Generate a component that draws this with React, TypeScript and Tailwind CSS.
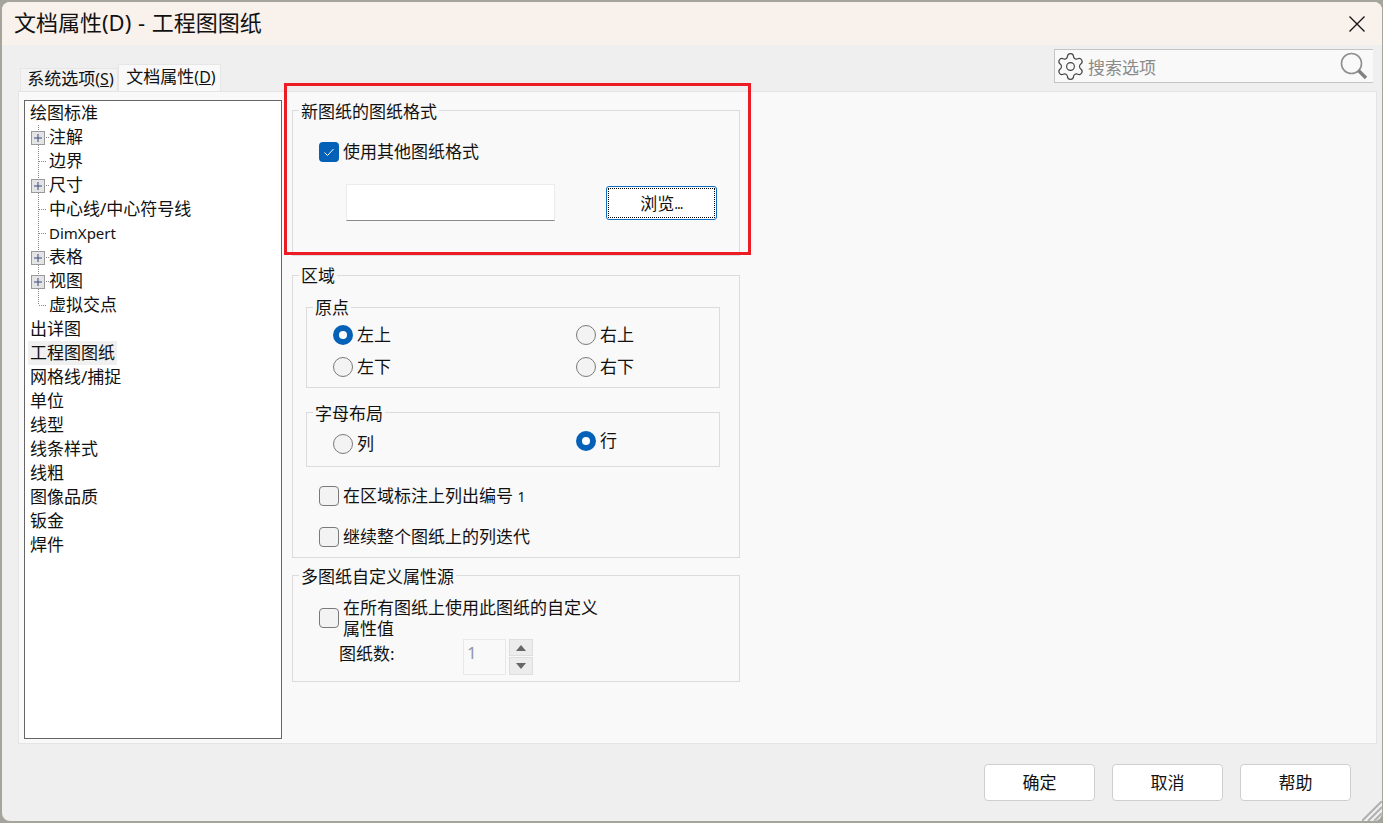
import React from "react";
import { Settings } from "lucide-react";

function Plus() {
  return (
    <svg width="19" height="24" viewBox="0 0 19 24" className="shrink-0">
      <line x1="8.5" y1="0" x2="8.5" y2="24" stroke="#8a8a8a" strokeDasharray="1 1" />
      <line x1="14" y1="12.5" x2="19" y2="12.5" stroke="#8a8a8a" strokeDasharray="1 1" />
      <rect x="1.5" y="6.5" width="13" height="13" fill="#e4e4e4" stroke="#9a9a9a" />
      <path d="M4 13H12M8 9V17" stroke="#3c4a7c" strokeWidth="1" fill="none" />
    </svg>
  );
}

function Branch({ last }: { last?: boolean }) {
  return (
    <svg width="19" height="24" viewBox="0 0 19 24" className="shrink-0">
      <line x1="8.5" y1="0" x2="8.5" y2={last ? 12 : 24} stroke="#8a8a8a" strokeDasharray="1 1" />
      <line x1="9" y1="12.5" x2="17" y2="12.5" stroke="#8a8a8a" strokeDasharray="1 1" />
    </svg>
  );
}

function Top({ children }: { children: React.ReactNode }) {
  return <div className="h-6 pl-[5px] leading-6">{children}</div>;
}

function Child({ children, plus, last }: { children: React.ReactNode; plus?: boolean; last?: boolean }) {
  return (
    <div className="flex h-6 items-center pl-[5px] leading-6">
      {plus ? <Plus /> : <Branch last={last} />}
      <span>{children}</span>
    </div>
  );
}

function Group({
  title,
  className,
  titleClass = "-mt-[11px]",
  children,
}: {
  title: string;
  className: string;
  titleClass?: string;
  children: React.ReactNode;
}) {
  return (
    <div className={`border border-[#dcdcdc] ${className}`}>
      <div className={`ml-[6px] h-6 w-fit bg-[#f9f9f9] px-[2px] leading-6 ${titleClass}`}>{title}</div>
      {children}
    </div>
  );
}

function Checkbox({ checked }: { checked?: boolean }) {
  return checked ? (
    <span className="flex h-5 w-5 shrink-0 items-center justify-center rounded-[4px] bg-[#0560b8]">
      <svg width="12" height="12" viewBox="0 0 12 12">
        <path d="M1.5 6.5L4.5 9.5L10.5 3" fill="none" stroke="#fff" strokeWidth="1" />
      </svg>
    </span>
  ) : (
    <span className="h-5 w-5 shrink-0 rounded-[4px] border border-[#7a7a7a] bg-[#f3f3f3]" />
  );
}

function Radio({ checked, label, className = "" }: { checked?: boolean; label: string; className?: string }) {
  return (
    <div className={`flex h-6 items-center gap-[4px] ${className}`}>
      {checked ? (
        <span className="flex h-5 w-5 shrink-0 items-center justify-center rounded-full bg-[#0560b8]">
          <span className="h-2 w-2 rounded-full bg-white" />
        </span>
      ) : (
        <span className="h-5 w-5 shrink-0 rounded-full border border-[#7a7a7a] bg-[#f3f3f3]" />
      )}
      <span>{label}</span>
    </div>
  );
}

function CheckRow({ label, className = "" }: { label: React.ReactNode; className?: string }) {
  return (
    <div className={`flex h-6 items-center gap-[4px] pl-[26px] ${className}`}>
      <Checkbox />
      <span>{label}</span>
    </div>
  );
}

function FooterButton({ label }: { label: string }) {
  return (
    <button className="h-[37px] w-[111px] rounded-[4px] border border-[#cfcfcf] bg-white text-[#111]">{label}</button>
  );
}

export default function App() {
  return (
    <div className="relative h-[823px] w-[1383px] overflow-hidden bg-[#a5a59c] pb-[2px] pl-[2px] pr-px pt-[2px] text-[17px] text-[#111] [font-family:'Noto_Sans','Noto_Sans_CJK_SC',sans-serif]">
      <div className="relative flex h-full flex-col overflow-hidden rounded-[8px] bg-[#efefef]">
        <div className="flex h-[43px] shrink-0 items-center justify-between bg-[#f9f1ec] pl-[12px] pr-[17px]">
          <span className="mb-[4px] text-[22px] leading-[40px] [word-spacing:1px]">文档属性(D) - 工程图图纸</span>
          <svg width="16" height="16" viewBox="0 0 16 16">
            <path d="M0.5 0.5L15.5 15.5M15.5 0.5L0.5 15.5" stroke="#111" strokeWidth="1.3" fill="none" />
          </svg>
        </div>

        <div className="flex h-[46px] shrink-0 items-end pl-[18px] pr-[9px]">
          <div className="flex h-[23px] w-[98px] items-center justify-center border-x border-t border-[#e6e6e6] bg-[#f3f3f3] pb-[2px] pl-[3px] leading-5">
            <span>
              系统选项<span className="text-[16px]">(<span className="underline">S</span>)</span>
            </span>
          </div>
          <div className="-mb-px flex h-[28px] w-[103px] items-center justify-center border-x border-t border-[#e6e6e6] bg-[#f9f9f9] pb-[3px] pl-[3px] leading-5">
            <span>
              文档属性<span className="text-[16px]">(<span className="underline">D</span>)</span>
            </span>
          </div>
          <div className="mb-[8px] ml-auto flex h-[34px] w-[319px] items-center border-y border-l border-[#c4c4c4] bg-[#f9f9f9] pr-[5px]">
            <Settings size={31} strokeWidth={0.9} className="text-[#444]" />
            <span className="ml-[2px] mt-[3px] text-[#8a8a8a]">搜索选项</span>
            <svg width="28" height="28" viewBox="0 0 28 28" className="ml-auto">
              <circle cx="11.5" cy="11.5" r="10" fill="none" stroke="#8f8f8f" strokeWidth="1.6" />
              <path d="M18.5 18.5L26 26" stroke="#808080" strokeWidth="3.4" fill="none" />
            </svg>
          </div>
        </div>

        <div className="ml-[16px] mr-[5px] flex h-[653px] shrink-0 border border-[#e4e4e4] bg-[#f9f9f9]">
          <div className="ml-[5px] mt-[8px] h-[639px] w-[258px] shrink-0 border border-[#666] bg-white">
            <Top>绘图标准</Top>
            <Child plus>注解</Child>
            <Child>边界</Child>
            <Child plus>尺寸</Child>
            <Child>中心线/中心符号线</Child>
            <Child>
              <span className="text-[15px]">DimXpert</span>
            </Child>
            <Child plus>表格</Child>
            <Child plus>视图</Child>
            <Child last>虚拟交点</Child>
            <Top>出详图</Top>
            <div className="h-6 pl-[3px] leading-6">
              <span className="inline-block h-6 bg-[#f0f0f0] px-[2px]">工程图图纸</span>
            </div>
            <Top>网格线/捕捉</Top>
            <Top>单位</Top>
            <Top>线型</Top>
            <Top>线条样式</Top>
            <Top>线粗</Top>
            <Top>图像品质</Top>
            <Top>钣金</Top>
            <Top>焊件</Top>
          </div>

          <div className="ml-[10px] w-[448px] shrink-0">
            <Group title="新图纸的图纸格式" className="mt-[18px] h-[146px]">
              <div className="mt-[16px] flex h-6 items-center gap-[4px] pl-[26px]">
                <Checkbox checked />
                <span>使用其他图纸格式</span>
              </div>
              <div className="mt-[20px] flex items-center pl-[53px]">
                <div className="h-[37px] w-[209px] border border-[#ececec] border-b-[#8a8a8a] bg-white" />
                <button className="ml-[51px] h-[34px] w-[111px] rounded-[3px] border border-[#0f6cbd] bg-white p-px">
                  <span className="flex h-full w-full items-center justify-center border border-dotted border-black pt-[2px]">
                    浏览<span className="text-[14px] tracking-[-1px]">...</span>
                  </span>
                </button>
              </div>
            </Group>

            <Group title="区域" titleClass="-mt-[12px]" className="mt-[19px] h-[283px]">
              <div className="ml-[13px] mt-[19px] h-[81px] w-[414px] border border-[#dcdcdc]">
                <div className="-mt-[12px] ml-[6px] h-6 w-fit bg-[#f9f9f9] px-[2px] leading-6">原点</div>
                <div className="ml-[26px] mt-[3px] grid grid-cols-[243px_1fr] gap-y-[8px]">
                  <Radio checked label="左上" />
                  <Radio label="右上" />
                  <Radio label="左下" />
                  <Radio label="右下" />
                </div>
              </div>
              <div className="ml-[13px] mt-[24px] h-[55px] w-[414px] border border-[#dcdcdc]">
                <div className="-mt-[11px] ml-[6px] h-6 w-fit bg-[#f9f9f9] px-[2px] leading-6">字母布局</div>
                <div className="ml-[26px] mt-[6px] grid grid-cols-[243px_1fr]">
                  <Radio label="列" />
                  <Radio checked label="行" className="-mt-[3px]" />
                </div>
              </div>
              <CheckRow
                label={
                  <>
                    在区域标注上列出编号 <span className="text-[14px]">1</span>
                  </>
                }
                className="mt-[17px]"
              />
              <CheckRow label="继续整个图纸上的列迭代" className="mt-[17px]" />
            </Group>

            <Group title="多图纸自定义属性源" className="mt-[17px] h-[107px]">
              <div className="mt-[8px] flex items-center gap-[4px] pl-[26px]">
                <Checkbox />
                <span className="w-[258px] leading-[21px]">在所有图纸上使用此图纸的自定义属性值</span>
              </div>
              <div className="flex items-center pl-[46px]">
                <span className="w-[124px] pb-[6px]">图纸数:</span>
                <div className="flex h-[36px] w-[43px] items-center border border-[#e8e8e8] pb-[8px] pl-[3px] text-[#8f97a8]">
                  1
                </div>
                <div className="ml-[3px] flex h-[36px] w-[24px] flex-col justify-between">
                  <div className="flex h-[17px] items-center justify-center border border-[#dedede] bg-[#ececec]">
                    <svg width="10" height="6" viewBox="0 0 10 6"><path d="M5 0L10 6H0Z" fill="#666" /></svg>
                  </div>
                  <div className="flex h-[18px] items-center justify-center border border-[#dedede] bg-[#ececec]">
                    <svg width="10" height="6" viewBox="0 0 10 6"><path d="M0 0H10L5 6Z" fill="#666" /></svg>
                  </div>
                </div>
              </div>
            </Group>
          </div>
        </div>

        <div className="flex flex-1 items-start justify-end gap-[17px] pr-[31px] pt-[20px]">
          <FooterButton label="确定" />
          <FooterButton label="取消" />
          <FooterButton label="帮助" />
        </div>

        <svg width="20" height="20" viewBox="0 0 20 20" className="absolute bottom-0 right-0">
          <path d="M20 0L0 20M20 6L6 20M20 12L12 20" stroke="#b0b0b0" strokeWidth="2" fill="none" />
        </svg>
      </div>

      <div className="absolute left-[284px] top-[83px] h-[172px] w-[467px] border-[3px] border-[#ed1c24]" />
    </div>
  );
}
